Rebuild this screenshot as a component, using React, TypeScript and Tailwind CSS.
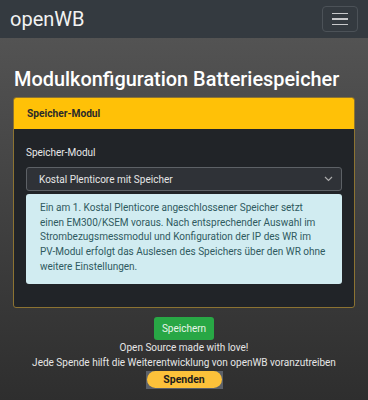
export default function App() {
    return (
        <div className="w-[368px] h-[400px] overflow-hidden bg-gradient-to-b from-[#575757] to-[#2e2e2e] text-white" style={{ fontFamily: "Roboto, 'Liberation Sans', sans-serif" }}>
            <nav className="h-[38px] bg-[#343a40] flex items-center justify-between pl-[10px] pr-[10px]">
                <span className="text-[20px] leading-none text-[#f2f2f2]">openWB</span>
                <button className="w-[36px] h-[26px] border border-[#4c5258] rounded flex flex-col items-center justify-center gap-[4px]">
                    <span className="w-[16px] h-[1.5px] bg-[#c8c9cb]"></span>
                    <span className="w-[16px] h-[1.5px] bg-[#c8c9cb]"></span>
                    <span className="w-[16px] h-[1.5px] bg-[#c8c9cb]"></span>
                </button>
            </nav>
            <div className="px-[13px]">
                <h1 className="mt-[30px] pl-[1px] text-[19.9px] font-medium leading-[24px] text-white whitespace-nowrap">Modulkonfiguration Batteriespeicher</h1>
                <div className="mt-[5px] border border-[#8c7332] rounded-[3px] bg-[#212428] overflow-hidden">
                    <div className="h-[31px] bg-[#ffc107] flex items-center px-[13px] text-[10.2px] font-bold text-[#2a2a2a]">Speicher-Modul</div>
                    <div className="px-[12px] pt-[17px] pb-[23px]">
                        <div className="text-[10px] text-[#e8e8e8] leading-[14px]">Speicher-Modul</div>
                        <div className="mt-[7px] h-[24px] border border-[#5d6166] rounded-[3px] bg-[#2f3237] flex items-center justify-between pl-[12px] pr-[8px]">
                            <span className="text-[10px] text-[#e6e6e6]">Kostal Plenticore mit Speicher</span>
                            <svg width="9" height="6" viewBox="0 0 9 6" fill="none" stroke="#aaaaaa" strokeWidth="1.2"><path d="M1 1l3.5 3.5L8 1" /></svg>
                        </div>
                        <div className="mt-[3px] bg-[#d1ecf1] rounded-[3px] text-[#2f5a60] text-[10px] leading-[14.7px] pl-[14px] pr-[15px] pt-[7px] pb-[9px]">
                            Ein am 1. Kostal Plenticore angeschlossener Speicher setzt einen EM300/KSEM voraus. Nach entsprechender Auswahl im Strombezugsmessmodul und Konfiguration der IP des WR im PV-Modul erfolgt das Auslesen des Speichers über den WR ohne weitere Einstellungen.
                        </div>
                    </div>
                </div>
                <div className="flex flex-col items-center mt-[9px]">
                    <button className="w-[60px] h-[23px] bg-[#28a745] rounded-[3px] text-[10px] text-[#e8f5ea]">Speichern</button>
                    <div className="text-[10px] leading-[15px] text-[#e6e6e6] text-center">
                        <div>Open Source made with love!</div>
                        <div className="whitespace-nowrap">Jede Spende hilft die Weiterentwicklung von openWB voranzutreiben</div>
                    </div>
                    <div className="mt-[1px] w-[77px] h-[18px] bg-[#5b6069] flex items-center justify-center">
                        <div className="w-[75px] h-[17px] rounded-full bg-[#fcc13a] flex items-center justify-center text-[10.5px] font-bold text-[#1c1c1c]">Spenden</div>
                    </div>
                </div>
            </div>
        </div>
    )
}
